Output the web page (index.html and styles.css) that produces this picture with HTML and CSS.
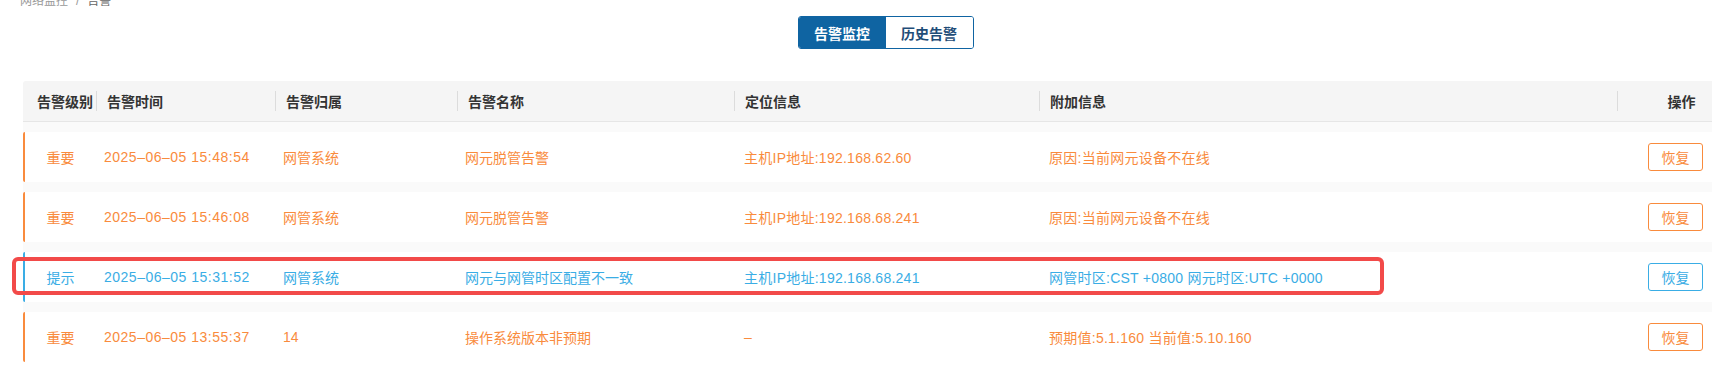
FILE: index.html
```html
<!DOCTYPE html>
<html lang="zh-CN">
<head>
  <meta charset="UTF-8" />
  <title>告警</title>
  <link rel="stylesheet" href="styles.css">
</head>
<body>
  <div class="page">
    <!-- breadcrumb -->
    <div class="crumb">
      <span class="crumb-item">网络监控</span>
      <span class="crumb-sep">/</span>
      <span class="crumb-cur">告警</span>
    </div>

    <!-- tab switch -->
    <div class="tabs">
      <div class="tab-group">
        <button class="tab active">告警监控</button>
        <button class="tab">历史告警</button>
      </div>
    </div>

    <div class="alarm-table">
      <div class="thead">
        <div class="th c1">告警级别</div>
        <div class="th c2">告警时间</div>
        <div class="th c3">告警归属</div>
        <div class="th c4">告警名称</div>
        <div class="th c5">定位信息</div>
        <div class="th c6">附加信息</div>
        <div class="th c7">操作</div>
      </div>

      <div class="tbody">
        <div class="row major">
          <div class="td c1">重要</div>
          <div class="td c2">2025–06–05 15:48:54</div>
          <div class="td c3">网管系统</div>
          <div class="td c4">网元脱管告警</div>
          <div class="td c5">主机IP地址:192.168.62.60</div>
          <div class="td c6">原因:当前网元设备不在线</div>
          <div class="td c7"><button class="btn">恢复</button></div>
        </div>
        <div class="row major">
          <div class="td c1">重要</div>
          <div class="td c2">2025–06–05 15:46:08</div>
          <div class="td c3">网管系统</div>
          <div class="td c4">网元脱管告警</div>
          <div class="td c5">主机IP地址:192.168.68.241</div>
          <div class="td c6">原因:当前网元设备不在线</div>
          <div class="td c7"><button class="btn">恢复</button></div>
        </div>
        <div class="row hint">
          <div class="td c1">提示</div>
          <div class="td c2">2025–06–05 15:31:52</div>
          <div class="td c3">网管系统</div>
          <div class="td c4">网元与网管时区配置不一致</div>
          <div class="td c5">主机IP地址:192.168.68.241</div>
          <div class="td c6">网管时区:CST +0800 网元时区:UTC +0000</div>
          <div class="td c7"><button class="btn">恢复</button></div>
          <!-- highlight annotation -->
          <div class="mark"></div>
        </div>
        <div class="row major">
          <div class="td c1">重要</div>
          <div class="td c2">2025–06–05 13:55:37</div>
          <div class="td c3">14</div>
          <div class="td c4">操作系统版本非预期</div>
          <div class="td c5">–</div>
          <div class="td c6">预期值:5.1.160 当前值:5.10.160</div>
          <div class="td c7"><button class="btn">恢复</button></div>
        </div>
      </div>
    </div>
  </div>
</body>
</html>
```

FILE: styles.css
```css
html, body {
  margin: 0;
  overflow: hidden;
  background: #ffffff;
}

body {
  font-family: "Liberation Sans", "Noto Sans CJK SC", sans-serif;
  font-size: 14px;
  color: #333;
}

.page {
  width: 1725px;
  padding-left: 23px;
}

/* breadcrumb */
.crumb {
  margin: -7px 0 0 -3px;
  height: 16px;
  line-height: 16px;
  font-size: 12px;
  color: #999;
  display: flex;
  gap: 8px;
}

.crumb-cur {
  color: #666;
}

/* tabs */
.tabs {
  margin-top: 7px;
  display: flex;
  justify-content: center;
}

.tab-group {
  display: flex;
  border: 1px solid #0f64a2;
  border-radius: 3px;
  overflow: hidden;
}

.tab {
  width: 87px;
  height: 31px;
  border: none;
  background: #fff;
  color: #1f4d78;
  font-family: inherit;
  font-size: 14px;
  font-weight: bold;
  padding: 0;
}

.tab.active {
  background: #0f64a2;
  color: #fff;
}

/* table */
.alarm-table {
  margin-top: 32px;
}

.thead,
.row {
  display: grid;
  grid-template-columns: 73px 179px 182px 277px 305px 578px 131px;
}

.thead {
  height: 40px;
  background: #f5f5f5;
  border-bottom: 1px solid #e6e6e6;
  border-radius: 3px 3px 0 0;
  font-weight: bold;
  color: #333;
}

.th {
  position: relative;
  display: flex;
  align-items: center;
  padding-left: 11px;
}

.th + .th::before {
  content: "";
  position: absolute;
  left: 0;
  top: 10px;
  height: 20px;
  border-left: 1px solid #dcdcdc;
}

.th.c1 {
  padding-left: 14px;
}

.th.c7 {
  padding-left: 0;
  padding-right: 2px;
  justify-content: center;
}

.tbody {
  background: #fafafa;
  padding-top: 10px;
}

.row {
  position: relative;
  height: 50px;
  background: #fff;
  margin-bottom: 10px;
  border-left: 2px solid;
  border-radius: 2px;
  grid-template-columns: 71px 179px 182px 277px 305px 578px 131px;
}

.row.major {
  color: #f98b3d;
  border-left-color: #f98b3d;
}

.row.hint {
  color: #3aade5;
  border-left-color: #3aade5;
}

.td {
  display: flex;
  align-items: center;
  white-space: nowrap;
  padding-left: 8px;
}

.td.c1 {
  padding-left: 0;
  justify-content: center;
}

.td.c2 {
  letter-spacing: 0.5px;
}

.td.c5,
.td.c6 {
  padding-left: 10px;
  letter-spacing: 0.25px;
}

.td.c7 {
  padding-left: 0;
  padding-right: 14px;
  justify-content: center;
}

.btn {
  width: 55px;
  height: 28px;
  background: #fff;
  border: 1px solid currentColor;
  border-radius: 3px;
  color: inherit;
  font-family: inherit;
  font-size: 14px;
  padding: 0;
}

/* red annotation box around the hint row */
.mark {
  position: absolute;
  left: -13px;
  top: 5px;
  width: 1364px;
  height: 30px;
  border: 4px solid #f24a49;
  border-radius: 6px;
  pointer-events: none;
}
```
